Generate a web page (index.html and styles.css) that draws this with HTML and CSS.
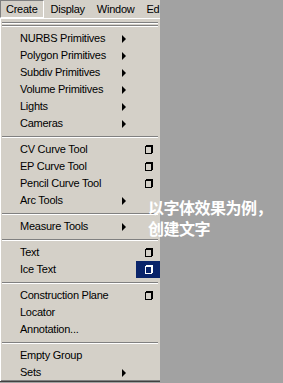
FILE: index.html
```html
<!DOCTYPE html>
<html lang="en">
  <head>
    <meta charset="UTF-8" />
    <title>Create Menu</title>
    <link rel="stylesheet" href="styles.css">
  </head>
  <body>
    <div class="screen">
      <div class="menu">
        <div class="menubar">
          <span class="menubar-item active">Create</span>
          <span class="menubar-item">Display</span>
          <span class="menubar-item">Window</span>
          <span class="menubar-item">Ed</span>
        </div>

        <div class="dropdown">
          <div class="tearoff"></div>

          <div class="item">NURBS Primitives<span class="arrow"></span></div>
          <div class="item">Polygon Primitives<span class="arrow"></span></div>
          <div class="item">Subdiv Primitives<span class="arrow"></span></div>
          <div class="item">Volume Primitives<span class="arrow"></span></div>
          <div class="item">Lights<span class="arrow"></span></div>
          <div class="item">Cameras<span class="arrow"></span></div>
          <div class="sep"></div>

          <div class="item">CV Curve Tool<span class="optbox"><svg width="8" height="9" viewBox="0 0 8 9"><path d="M1 0H8V8H7V9H0V1H1Z M1 2V8H6V2Z" fill="#000" fill-rule="evenodd"/></svg></span></div>
          <div class="item">EP Curve Tool<span class="optbox"><svg width="8" height="9" viewBox="0 0 8 9"><path d="M1 0H8V8H7V9H0V1H1Z M1 2V8H6V2Z" fill="#000" fill-rule="evenodd"/></svg></span></div>
          <div class="item">Pencil Curve Tool<span class="optbox"><svg width="8" height="9" viewBox="0 0 8 9"><path d="M1 0H8V8H7V9H0V1H1Z M1 2V8H6V2Z" fill="#000" fill-rule="evenodd"/></svg></span></div>
          <div class="item">Arc Tools<span class="arrow"></span></div>
          <div class="sep"></div>

          <div class="item">Measure Tools<span class="arrow"></span></div>
          <div class="sep"></div>

          <div class="item">Text<span class="optbox"><svg width="8" height="9" viewBox="0 0 8 9"><path d="M1 0H8V8H7V9H0V1H1Z M1 2V8H6V2Z" fill="#000" fill-rule="evenodd"/></svg></span></div>
          <div class="item">Ice Text<span class="optbox selected"><svg width="8" height="9" viewBox="0 0 8 9"><path d="M1 0H8V8H7V9H0V1H1Z M1 2V8H6V2Z" fill="#fff" fill-rule="evenodd"/></svg></span></div>
          <div class="sep"></div>

          <div class="item">Construction Plane<span class="optbox"><svg width="8" height="9" viewBox="0 0 8 9"><path d="M1 0H8V8H7V9H0V1H1Z M1 2V8H6V2Z" fill="#000" fill-rule="evenodd"/></svg></span></div>
          <div class="item">Locator</div>
          <div class="item">Annotation...</div>
          <div class="sep"></div>

          <div class="item">Empty Group</div>
          <div class="item">Sets<span class="arrow"></span></div>
        </div>
      </div>

      <div class="caption">以字体效果为例，<br />创建文字</div>
    </div>
  </body>
</html>
```

FILE: styles.css
```css
body {
  margin: 0;
  background: #a2a2a2;
  font-family: "Liberation Sans", Arial, sans-serif;
  font-size: 11px;
  letter-spacing: -0.25px;
  color: #000;
}

.screen {
  position: relative;
  width: 283px;
  height: 383px;
  overflow: hidden;
}

.menu {
  width: 160px;
  background: #d4d0c8;
}

.menubar {
  display: flex;
  height: 18px;
  align-items: center;
}

.menubar-item {
  padding: 0 6px;
  height: 18px;
  line-height: 18px;
  box-sizing: border-box;
}

.menubar-item.active {
  border-top: 1px solid #808080;
  border-left: 1px solid #808080;
  border-right: 1px solid #fff;
  border-bottom: 1px solid #fff;
  padding: 0 5px 0 5px;
  line-height: 16px;
  margin-right: 1px;
}

.dropdown {
  box-shadow: inset 1px 0 0 #fff, inset 0 -1px 0 #808080;
  border-bottom: 1px solid #404040;
}

.tearoff {
  height: 12px;
  box-sizing: border-box;
  padding-top: 3px;
  border-top: 1px solid #fff;
}

.tearoff::before,
.tearoff::after {
  content: "";
  display: block;
  height: 1px;
  border-top: 1px solid #808080;
  background: #fff;
  margin: 0 2px 1px 2px;
}

.item {
  position: relative;
  height: 17px;
  line-height: 17px;
  padding-left: 20px;
  white-space: nowrap;
}

.arrow {
  position: absolute;
  left: 122px;
  top: 5px;
  width: 0;
  height: 0;
  border-top: 4px solid transparent;
  border-bottom: 4px solid transparent;
  border-left: 4px solid #000;
}

.optbox {
  position: absolute;
  left: 136px;
  top: 0;
  width: 24px;
  height: 17px;
  display: flex;
  align-items: center;
  padding-left: 9px;
  box-sizing: border-box;
}

.optbox.selected {
  background: #0a246a;
}

.sep {
  height: 9px;
  position: relative;
}

.sep::before {
  content: "";
  position: absolute;
  left: 2px;
  right: 2px;
  top: 4px;
  height: 1px;
  background: #808080;
  border-bottom: 1px solid #fff;
}

.caption {
  position: absolute;
  left: 148px;
  top: 197px;
  color: #fff;
  font-family: "Noto Sans CJK SC", sans-serif;
  font-size: 16px;
  line-height: 21px;
  letter-spacing: -0.5px;
  font-weight: bold;
}
```
